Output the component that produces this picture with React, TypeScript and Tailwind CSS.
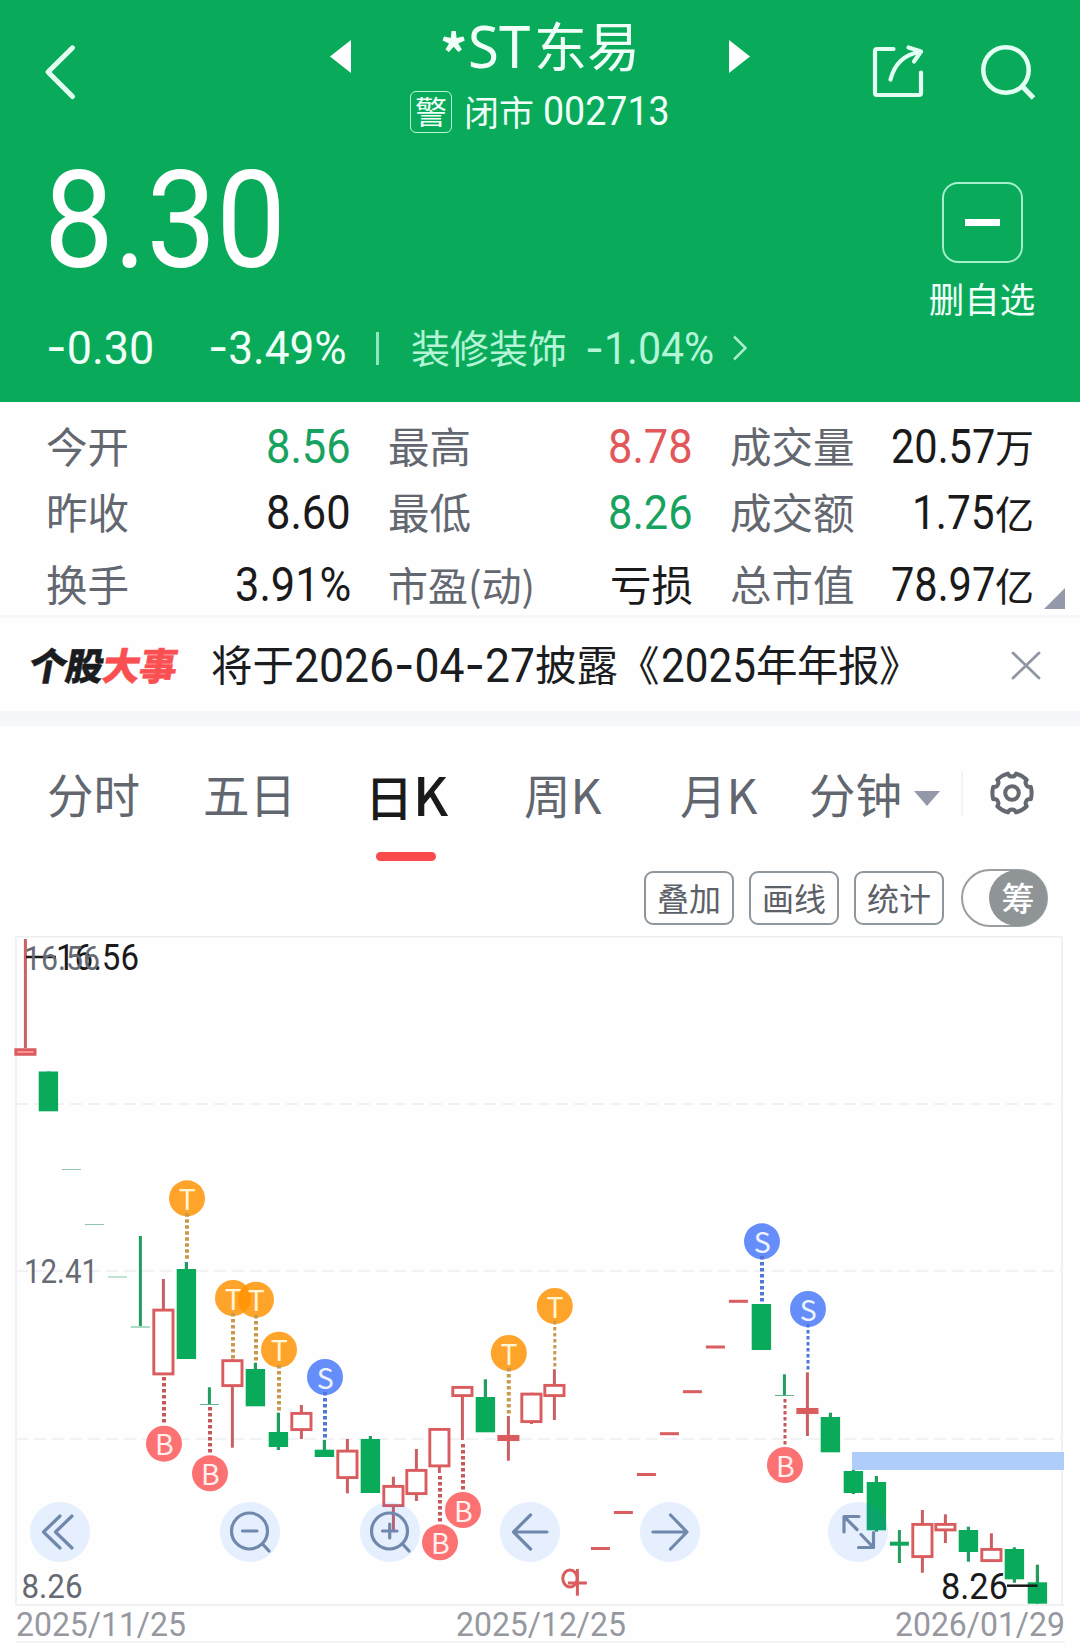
import { useLayoutEffect, useRef, useState } from "react";
import type { ReactNode } from "react";

/* ---------- text helpers ---------- */

const LATIN = "font-['Roboto','Noto_Sans_CJK_SC',sans-serif]";
const CJK = "font-['Noto_Sans_CJK_SC','Noto_Sans',sans-serif]";

/** Digits condensed to a given advance width. */
function Num({ w, className = "", children }: { w: number; className?: string; children: string }) {
  const ref = useRef<HTMLSpanElement>(null);
  const [k, setK] = useState(0.88);
  useLayoutEffect(() => {
    if (ref.current) setK(w / ref.current.offsetWidth);
  }, [w, children]);
  const parts = children.split(/(-)/);
  return (
    <span className={`inline-block shrink-0 whitespace-nowrap leading-none ${LATIN} ${className}`} style={{ width: w }}>
      <span ref={ref} className="inline-block origin-left" style={{ transform: `scaleX(${k})` }}>
        {parts.map((p, i) =>
          p === "-" ? (
            <span key={i} className="font-['Inter',sans-serif]">-</span>
          ) : (
            p
          ),
        )}
      </span>
    </span>
  );
}

function Zh({ className = "", children }: { className?: string; children: ReactNode }) {
  return (
    <span className={`inline-block shrink-0 -translate-y-[0.056em] whitespace-nowrap leading-none ${CJK} ${className}`}>
      {children}
    </span>
  );
}

/* ---------- header ---------- */

function Header() {
  return (
    <header className="h-[402px] bg-[#09ab5a] text-[#f0fff8]">
      <div className="flex h-[150px]">
        <svg className="ml-[40px] mt-[38px] h-[68px] w-[40px]" viewBox="0 0 40 68" fill="none" stroke="#e3fff3" strokeWidth="5" strokeLinecap="round" strokeLinejoin="round">
          <path d="M32.500 9.800 8 34 32.500 58.500" />
        </svg>
        <svg className="ml-[250px] mt-[40px] h-[33px] w-[21px]" viewBox="0 0 21 33" fill="#ffffff">
          <path d="M0 16.500 21 0V33Z" />
        </svg>
        <div className="mx-[39px] mt-[12px] flex w-[300px] flex-col items-center">
          <div className="flex h-[71px] items-center">
            <Zh className="mr-[2px] w-[26px] translate-y-[4px] text-[54px] font-bold">*</Zh>
            <Zh className="mr-[3px] text-[58px]">
              <span className="inline-block w-[63px] origin-left scale-x-[0.97] font-['Noto_Sans',sans-serif]">ST</span>
            </Zh>
            <Zh className="text-[53px]">东易</Zh>
          </div>
          <div className="-mt-[2px] flex h-[62px] items-center">
            <span className="mr-[12px] flex h-[42px] w-[42px] items-center justify-center rounded-[6px] border-[1.5px] border-[#b9f5d9]">
              <Zh className="text-[32px]">警</Zh>
            </span>
            <Zh className="mr-[9px] text-[35px]">闭市</Zh>
            <Num w={127} className="-mt-[2px] text-[40.500px]">002713</Num>
          </div>
        </div>
        <svg className="mt-[40px] h-[33px] w-[21px]" viewBox="0 0 21 33" fill="#ffffff">
          <path d="M21 16.500 0 0V33Z" />
        </svg>
        <svg className="ml-[118px] mt-[42px] h-[60px] w-[60px]" viewBox="0 0 60 60" fill="none" stroke="#e3fff3" strokeWidth="4.200" strokeLinecap="round" strokeLinejoin="round">
          <path d="M25.500 7H9Q7 7 7 9V51Q7 53 9 53H51Q53 53 53 51V30.500" />
          <path d="M22.500 37.500C26 24 34 12.500 52.500 10M40.500 5.500 53 9.500 46 19.500" />
        </svg>
        <svg className="ml-[47px] mt-[40px] h-[64px] w-[64px]" viewBox="0 0 64 64" fill="none" stroke="#e3fff3" strokeWidth="4.500">
          <circle cx="31" cy="30" r="22.700" />
          <path d="M46.500 45.500 58.500 58" strokeWidth="5" />
        </svg>
      </div>

      <div className="flex h-[168px] justify-between pl-[44px] pr-[44px]">
        <Num w={242} className="mt-[3px] text-[136px] text-white">8.30</Num>
        <div className="flex w-[108px] flex-col items-center pt-[32px]">
          <span className="flex h-[81px] w-[81px] shrink-0 items-center justify-center rounded-[16px] border-2 border-[#a5efcd]">
            <span className="h-[7px] w-[35px] bg-white" />
          </span>
          <Zh className="mt-[19px] text-[35.500px]">删自选</Zh>
        </div>
      </div>

      <div className="flex h-[60px] items-center pl-[46px]">
        <Num w={108} className="-mt-[2px] text-[47px]">-0.30</Num>
        <Num w={139} className="-mt-[2px] ml-[54px] text-[47px]">-3.49%</Num>
        <span className="ml-[29px] h-[33px] w-[3px] bg-[#8fe6c0]" />
        <Zh className="ml-[32px] text-[39px] text-[#b5f5d7]">装修装饰</Zh>
        <Num w={129} className="ml-[18px] text-[44px] text-[#b5f5d7]">-1.04%</Num>
        <svg className="ml-[17px] h-[28px] w-[18px]" viewBox="0 0 18 28" fill="none" stroke="#a5efcd" strokeWidth="2.500">
          <path d="M3 2.500 14.500 14 3 25.500" />
        </svg>
      </div>
    </header>
  );
}

/* ---------- quote grid ---------- */

type Cell = { label: string; labelSize?: string; num?: string; w?: number; zh?: string; color?: string };

const ROWS: { h: string; cells: Cell[] }[] = [
  {
    h: "mt-[13px] h-[65px]",
    cells: [
      { label: "今开", num: "8.56", w: 85, color: "text-[#18a260]" },
      { label: "最高", num: "8.78", w: 85, color: "text-[#e2585a]" },
      { label: "成交量", num: "20.57", w: 104, zh: "万" },
    ],
  },
  {
    h: "h-[68px]",
    cells: [
      { label: "昨收", num: "8.60", w: 85 },
      { label: "最低", num: "8.26", w: 85, color: "text-[#18a260]" },
      { label: "成交额", num: "1.75", w: 83, zh: "亿" },
    ],
  },
  {
    h: "mt-[6px] h-[61px] pt-[3px]",
    cells: [
      { label: "换手", num: "3.91%", w: 116 },
      { label: "市盈(动)", labelSize: "text-[40px]", zh: "亏损" },
      { label: "总市值", num: "78.97", w: 104, zh: "亿" },
    ],
  },
];

function Quotes() {
  return (
    <section className="relative flex h-[216px] flex-col border-b-[3px] border-[#f5f7f9] pl-[46px] pr-[45px]">
      {ROWS.map((row, i) => (
        <div key={i} className={`grid shrink-0 grid-cols-[305px_305px_304px] items-center gap-x-[37px] ${row.h}`}>
          {row.cells.map((c) => (
            <div key={c.label} className="flex items-center justify-between">
              <Zh className={`text-[#636770] ${c.labelSize ?? "text-[41.500px]"}`}>{c.label}</Zh>
              <span className={`flex items-center ${c.color ?? "text-[#1a1a1a]"}`}>
                {c.num && <Num w={c.w ?? 85} className="text-[47.500px]">{c.num}</Num>}
                {c.zh && <Zh className={c.num ? "text-[39px]" : "text-[41.500px]"}>{c.zh}</Zh>}
              </span>
            </div>
          ))}
        </div>
      ))}
      <svg className="absolute right-[15px] top-[186px] h-[21px] w-[21px]" viewBox="0 0 21 21" fill="#9399a8">
        <path d="M21 0V21H0Z" />
      </svg>
    </section>
  );
}

function NewsBar() {
  return (
    <section className="flex h-[108px] items-center border-b-[15px] border-[#f6f7fa] pt-[2px] text-[#1a1c20]">
      <Zh className="ml-[30px] w-[183px] -skew-x-[10deg] text-[37.500px] font-black tracking-[-0.700px] [-webkit-text-stroke:0.5px_currentColor]">
        个股<span className="text-[#fa5052]">大事</span>
      </Zh>
      <Zh className="ml-[-2px] mt-[1px] text-[41.500px]">将于</Zh>
      <Num w={241} className="text-[48px]">2026-04-27</Num>
      <Zh className="mt-[1px] w-[124px] text-[41.500px]">披露《</Zh>
      <Num w={95} className="ml-[2px] text-[48px]">2025</Num>
      <Zh className="mt-[1px] text-[41.500px] tracking-[-0.500px]">年年报》</Zh>
      <svg className="ml-[91px] h-[29px] w-[30px]" viewBox="0 0 30 29" stroke="#9096a2" strokeWidth="2.800" strokeLinecap="round">
        <path d="M2 2 28 27M28 2 2 27" />
      </svg>
    </section>
  );
}

/* ---------- tabs and tools ---------- */

function gearPath() {
  const pt = (r: number, deg: number) => {
    const a = (deg * Math.PI) / 180;
    return `${(24 + r * Math.cos(a)).toFixed(2)} ${(24 + r * Math.sin(a)).toFixed(2)}`;
  };
  let d = "";
  for (let i = 0; i < 6; i++) {
    const c = i * 60;
    d += `${i ? "L" : "M"}${pt(19.8, c - 18)}Q${pt(20.4, c)} ${pt(19.8, c + 18)}C${pt(16.8, c + 20)} ${pt(16.4, c + 25)} ${pt(16.4, c + 30)}C${pt(16.4, c + 35)} ${pt(16.8, c + 40)} ${pt(19.8, c + 42)}`;
  }
  return d + "Z";
}

function Tabs() {
  return (
    <nav className="flex h-[139px] items-start pl-[47px] pt-[43px] text-[46.500px] text-[#61666f]">
      <div className="flex h-[54px] w-[156px] items-center"><Zh>分时</Zh></div>
      <div className="flex h-[54px] w-[162px] items-center"><Zh>五日</Zh></div>
      <div className="flex w-[159px] flex-col">
        <div className="flex h-[54px] items-center text-[#1a1a1a]">
          <Zh className="text-[48px] font-medium">日<span className="text-[53px]">K</span></Zh>
        </div>
        <span className="ml-[11px] mt-[29px] h-[9px] w-[60px] rounded-full bg-[#fa4b4c]" />
      </div>
      <div className="flex h-[54px] w-[156px] items-center"><Zh>周<span className="text-[48px]">K</span></Zh></div>
      <div className="flex h-[54px] w-[129px] items-center"><Zh>月<span className="text-[48px]">K</span></Zh></div>
      <div className="flex h-[54px] items-center">
        <Zh>分钟</Zh>
        <svg className="ml-[12px] mt-[4px] h-[15px] w-[26px]" viewBox="0 0 26 15" fill="#9399a8">
          <path d="M0 0H26L13 15Z" />
        </svg>
      </div>
      <span className="ml-[21px] mt-[2px] h-[45px] w-[2px] bg-[#f2f3f5]" />
      <svg className="ml-[25px] h-[48px] w-[48px]" viewBox="0 0 48 48" fill="none" stroke="#636871" strokeWidth="4" strokeLinejoin="round">
        <path d={gearPath()} />
        <circle cx="24" cy="24" r="6.800" />
      </svg>
    </nav>
  );
}

function Tools() {
  return (
    <div className="flex h-[71px] items-start justify-end pr-[32px] pt-[4px]">
      {["叠加", "画线", "统计"].map((t) => (
        <span key={t} className="mr-[15px] mt-[2px] flex h-[54px] w-[90px] items-center justify-center rounded-[9px] border-2 border-[#8d979d] pt-[2px] text-[32px] text-[#5c6067]">
          <Zh>{t}</Zh>
        </span>
      ))}
      <span className="ml-[2px] flex h-[58px] w-[87px] justify-end rounded-full border-2 border-[#9a9ea0]">
        <span className="-mr-[1px] -mt-[1px] flex h-[56px] w-[58px] items-center justify-center rounded-full bg-[#8f9497] pt-[2px] text-[33px] font-medium text-white">
          <Zh>筹</Zh>
        </span>
      </span>
    </div>
  );
}

/* ---------- candle chart ---------- */

const RED = "#d95c5e";
const GREEN = "#09aa5a";
const STEP = 23;
const X0 = 25.4;

type Candle = { i: number; c: "r" | "g"; hi: number; lo: number; top: number; bot: number; fill?: string };

const CANDLES: Candle[] = [
  { i: 0, c: "r", hi: 939, lo: 1048, top: 1048.3, bot: 1055.7, fill: "#ff9a9a" },
  { i: 1, c: "g", hi: 1071.5, lo: 1111, top: 1071.5, bot: 1111.3 },
  { i: 6, c: "r", hi: 1279, lo: 1309, top: 1308.7, bot: 1375.3 },
  { i: 7, c: "g", hi: 1262, lo: 1359, top: 1269, bot: 1359 },
  { i: 9, c: "r", hi: 1359.3, lo: 1447.7, top: 1359.3, bot: 1387 },
  { i: 10, c: "g", hi: 1362.7, lo: 1406, top: 1369, bot: 1406.3 },
  { i: 11, c: "g", hi: 1412.7, lo: 1450, top: 1432, bot: 1447 },
  { i: 12, c: "r", hi: 1405, lo: 1439, top: 1412, bot: 1431 },
  { i: 13, c: "g", hi: 1440, lo: 1457, top: 1449.7, bot: 1457 },
  { i: 14, c: "r", hi: 1439, lo: 1493.3, top: 1449.7, bot: 1479 },
  { i: 15, c: "g", hi: 1436, lo: 1493, top: 1439, bot: 1493 },
  { i: 16, c: "r", hi: 1476.7, lo: 1530, top: 1485, bot: 1507 },
  { i: 17, c: "r", hi: 1449, lo: 1501, top: 1469, bot: 1495 },
  { i: 18, c: "r", hi: 1428, lo: 1473, top: 1428, bot: 1467.3 },
  { i: 19, c: "r", hi: 1386, lo: 1440, top: 1386, bot: 1397 },
  { i: 20, c: "g", hi: 1379.3, lo: 1432, top: 1397, bot: 1432.3 },
  { i: 21, c: "r", hi: 1416, lo: 1460.7, top: 1435, bot: 1441 },
  { i: 22, c: "r", hi: 1392.7, lo: 1424, top: 1392.7, bot: 1423 },
  { i: 23, c: "r", hi: 1369.3, lo: 1420, top: 1384, bot: 1397 },
  { i: 32, c: "g", hi: 1304, lo: 1350, top: 1304, bot: 1350 },
  { i: 34, c: "r", hi: 1372.3, lo: 1436, top: 1408, bot: 1414 },
  { i: 35, c: "g", hi: 1412.7, lo: 1452, top: 1417, bot: 1452.3 },
  { i: 36, c: "g", hi: 1470, lo: 1494, top: 1471, bot: 1493 },
  { i: 37, c: "g", hi: 1476, lo: 1531.7, top: 1482, bot: 1530.3 },
  { i: 39, c: "r", hi: 1510, lo: 1572.7, top: 1523, bot: 1558 },
  { i: 40, c: "r", hi: 1514.3, lo: 1543, top: 1523, bot: 1531.3 },
  { i: 41, c: "g", hi: 1526.7, lo: 1561.7, top: 1530, bot: 1552 },
  { i: 42, c: "r", hi: 1533.3, lo: 1562, top: 1548, bot: 1562 },
  { i: 43, c: "g", hi: 1547.3, lo: 1582.7, top: 1549, bot: 1579.3 },
  { i: 44, c: "g", hi: 1564.7, lo: 1603.7, top: 1582.3, bot: 1603.7 },
];

/** Sessions that opened and closed at one price: index, y, thickness, colour, optional wick. */
const FLATS: { i: number; y: number; t: number; color: string; wick?: [number, number] }[] = [
  { i: 2, y: 1169.5, t: 1, color: "#8fc4aa" },
  { i: 3, y: 1224.5, t: 1, color: "#8fc4aa" },
  { i: 4, y: 1277, t: 2, color: "#bfe5d2" },
  { i: 5, y: 1327, t: 2, color: "#a9dcc3", wick: [1236, 1327] },
  { i: 8, y: 1404.5, t: 1, color: "#5cb88a", wick: [1387.3, 1404.5] },
  { i: 24, y: 1583, t: 3, color: RED, wick: [1569, 1595.7] },
  { i: 25, y: 1548.5, t: 3, color: RED },
  { i: 26, y: 1512.5, t: 3, color: RED },
  { i: 27, y: 1474.5, t: 3, color: RED },
  { i: 28, y: 1433.7, t: 3, color: RED },
  { i: 29, y: 1391.7, t: 3, color: RED },
  { i: 30, y: 1347, t: 3, color: RED },
  { i: 31, y: 1301.3, t: 3, color: RED },
  { i: 33, y: 1395.5, t: 1, color: "#5cb88a", wick: [1374.3, 1395.5] },
  { i: 38, y: 1543.7, t: 4, color: "#12a55c", wick: [1530, 1563] },
];

const MARKS: { k: "T" | "B" | "S"; x: number; y: number; from: number; to: number; w: number }[] = [
  { k: "T", x: 187, y: 1198.3, from: 1213.3, to: 1260, w: 4 },
  { k: "T", x: 233, y: 1298, from: 1313, to: 1359, w: 4 },
  { k: "T", x: 256, y: 1299.7, from: 1315, to: 1363, w: 4 },
  { k: "T", x: 279, y: 1349.7, from: 1365, to: 1411, w: 4 },
  { k: "S", x: 325, y: 1377, from: 1392, to: 1438, w: 4 },
  { k: "B", x: 164, y: 1443.7, from: 1377, to: 1424, w: 4 },
  { k: "B", x: 210, y: 1473.3, from: 1407, to: 1454, w: 4 },
  { k: "T", x: 508.8, y: 1353, from: 1368, to: 1414, w: 4 },
  { k: "T", x: 554.8, y: 1306, from: 1321, to: 1368, w: 3 },
  { k: "B", x: 440, y: 1542.3, from: 1476, to: 1522, w: 4 },
  { k: "B", x: 463, y: 1510, from: 1444, to: 1490, w: 4 },
  { k: "S", x: 762, y: 1241.3, from: 1256, to: 1302, w: 4 },
  { k: "S", x: 808, y: 1309, from: 1324, to: 1370, w: 3 },
  { k: "B", x: 785, y: 1465, from: 1399, to: 1445, w: 3 },
];

const MARK_FILL = { T: "#ff9100", B: "#fb5456", S: "#4677fa" };
const MARK_LINE = { T: "#c9994c", B: "#c4585b", S: "#4f78d6" };
const MARK_TEXT = { T: "#fff6d6", B: "#fff0ef", S: "#eef4ff" };

function CandleShape({ d }: { d: Candle }) {
  const x = X0 + d.i * STEP;
  if (d.c === "g") {
    return (
      <g fill={GREEN}>
        <rect x={x - 1.6} y={d.hi} width={3.2} height={d.lo - d.hi} fill="#209d5f" />
        <rect x={x - 9.7} y={d.top} width={19.4} height={d.bot - d.top} />
      </g>
    );
  }
  const solid = d.bot - d.top < 7;
  return (
    <g>
      <rect x={x - 1.5} y={d.hi} width={3} height={d.lo - d.hi} fill="#c96164" />
      <rect
        x={x - 9.6}
        y={d.top + 1.4}
        width={19.2}
        height={d.bot - d.top - 2.8}
        fill={solid ? "#ee5355" : (d.fill ?? "#ffffff")}
        stroke={RED}
        strokeWidth="2.900"
      />
    </g>
  );
}

function ControlIcons() {
  return (
    <g>
      {[60, 250, 390, 530, 670, 858].map((cx) => (
        <circle key={cx} cx={cx} cy="1532" r="30" fill="#1a75ff" fillOpacity="0.110" />
      ))}
      <g fill="none" stroke="#7088ab" strokeWidth="3.200" strokeLinecap="round" strokeLinejoin="round">
        <path d="M60 1516 43.500 1532 60 1548M72 1516 55.500 1532 72 1548" />
        <circle cx="249.500" cy="1531" r="18" />
        <path d="M242.500 1531H257M262.500 1544 269 1551" />
        <circle cx="389.500" cy="1531" r="18" />
        <path d="M382.500 1531H397M389.700 1524V1538M402.500 1544 409 1551" />
        <path d="M547 1532H513.500M530.500 1515 513.500 1532 530.500 1549" />
        <path d="M653 1532H686.500M670.500 1515 687 1532 670.500 1549" />
        <path d="M844 1532V1516.500H859M844.500 1517 857 1529.500M858.500 1547.500H873.500V1532.500M861 1534.500 873 1547" />
      </g>
    </g>
  );
}

function Chart() {
  return (
    <section>
      <svg className="block h-[670px] w-[1080px]" viewBox="0 936 1080 670">
        <path d="M16 936.800H1063" stroke="#eceef1" strokeWidth="1.400" />
        <path d="M16 936V1606M1062 936V1606M15 1605H1064" stroke="#eff1f4" strokeWidth="2" fill="none" />
        <path d="M16 1104H1062M16 1271H1062M16 1439H1062" stroke="#f0f2f5" strokeWidth="2" strokeDasharray="12 6" />

        {FLATS.map((f) => {
          const x = X0 + f.i * STEP;
          return (
            <g key={f.i}>
              {f.wick && (
                <rect x={x - 1.5} y={f.wick[0]} width={3} height={f.wick[1] - f.wick[0]} fill={f.color === RED ? RED : "#209d5f"} />
              )}
              <rect x={x - 9.5} y={f.y - f.t / 2} width={19} height={f.t} fill={f.color} />
            </g>
          );
        })}
        {CANDLES.map((d) => (
          <CandleShape key={d.i} d={d} />
        ))}
        <ellipse cx="570" cy="1578.500" rx="7.200" ry="8.600" fill="none" stroke={RED} strokeWidth="3" />
        <rect x="852" y="1452" width="212" height="18" fill="#afcdfb" />

        {MARKS.map((m) => (
          <g key={`${m.k}${m.x}`}>
            <circle cx={m.x} cy={m.y} r="18" fill={MARK_FILL[m.k]} fillOpacity="0.830" />
            <path d={`M${m.x} ${m.from}V${m.to}`} stroke={MARK_LINE[m.k]} strokeWidth={m.w} strokeDasharray="3.500 2.500" />
            <text x={m.x + 0.3} y={m.y + 11.5} textAnchor="middle" fontSize="28.500" fill={MARK_TEXT[m.k]} className="font-['Noto_Sans_CJK_SC',sans-serif]">
              {m.k}
            </text>
          </g>
        ))}

        <path d="M26 957H56" stroke="#1a1a1a" strokeWidth="2.500" />
        <g className="font-['Roboto',sans-serif]">
          <text x="56" y="969.500" fontSize="36.500" fill="#1a1a1a" textLength="83" lengthAdjust="spacingAndGlyphs">16.56</text>
          <text x="24" y="969.700" fontSize="34" fill="#666a73" textLength="76" lengthAdjust="spacingAndGlyphs">16.56</text>
          <text x="24" y="1282.700" fontSize="34" fill="#666a73" textLength="74" lengthAdjust="spacingAndGlyphs">12.41</text>
          <text x="21.500" y="1598" fontSize="34" fill="#666a73" textLength="61" lengthAdjust="spacingAndGlyphs">8.26</text>
          <text x="941" y="1599" fontSize="36.500" fill="#1a1a1a" textLength="67" lengthAdjust="spacingAndGlyphs">8.26</text>
        </g>
        <path d="M1007 1585.700H1037.500" stroke="#1a1a1a" strokeWidth="2.500" />
        <ControlIcons />
      </svg>
      <div className="ml-[16px] flex h-[37px] w-[1049px] items-center justify-between border-b-2 border-[#f2f3f6] pt-[1px] text-[34px] text-[#95989e]">
        <Num w={170}>2025/11/25</Num>
        <Num w={170}>2025/12/25</Num>
        <Num w={170}>2026/01/29</Num>
      </div>
    </section>
  );
}

export default function App() {
  return (
    <main className="h-[1648px] w-[1080px] overflow-hidden bg-[#fefefe]">
      <Header />
      <Quotes />
      <NewsBar />
      <Tabs />
      <Tools />
      <Chart />
    </main>
  );
}
